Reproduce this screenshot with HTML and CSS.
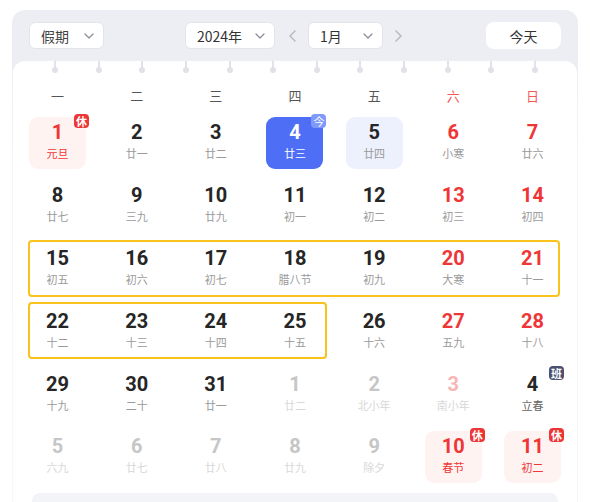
FILE: index.html
```html
<!DOCTYPE html>
<html lang="zh-CN">
<head>
<meta charset="utf-8">
<title>日历</title>
<link rel="stylesheet" href="styles.css">
</head>
<body>
<div class="panel">
  <div class="toolbar">
    <div class="select sel-holiday"><span>假期</span><svg class="chev" viewBox="0 0 10 6" width="10" height="6"><polyline points="1,1 5,5 9,1"/></svg></div>
    <div class="center">
      <div class="select sel-year"><span>2024年</span><svg class="chev" viewBox="0 0 10 6" width="10" height="6"><polyline points="1,1 5,5 9,1"/></svg></div>
      <svg class="arrow" viewBox="0 0 7 12" width="7" height="12"><polyline points="6,1 1,6 6,11"/></svg>
      <div class="select sel-month"><span>1月</span><svg class="chev" viewBox="0 0 10 6" width="10" height="6"><polyline points="1,1 5,5 9,1"/></svg></div>
      <svg class="arrow" viewBox="0 0 7 12" width="7" height="12"><polyline points="1,1 6,6 1,11"/></svg>
    </div>
    <button class="today-btn">今天</button>
  </div>
  <div class="card">
    <div class="rings">
      <i class="ring"></i><i class="ring"></i><i class="ring"></i><i class="ring"></i><i class="ring"></i><i class="ring"></i>
      <i class="ring"></i><i class="ring"></i><i class="ring"></i><i class="ring"></i><i class="ring"></i><i class="ring"></i>
    </div>
    <div class="weekdays">
      <span>一</span><span>二</span><span>三</span><span>四</span><span>五</span><span class="we">六</span><span class="we">日</span>
    </div>
    <div class="weeks">
      <div class="week">
        <div class="cell"><div class="day holiday"><span class="num">1</span><span class="lunar">元旦</span><b class="badge rest">休</b></div></div>
        <div class="cell"><div class="day"><span class="num">2</span><span class="lunar">廿一</span></div></div>
        <div class="cell"><div class="day"><span class="num">3</span><span class="lunar">廿二</span></div></div>
        <div class="cell"><div class="day today"><span class="num">4</span><span class="lunar">廿三</span><b class="badge now">今</b></div></div>
        <div class="cell"><div class="day selected"><span class="num">5</span><span class="lunar">廿四</span></div></div>
        <div class="cell"><div class="day weekend"><span class="num">6</span><span class="lunar">小寒</span></div></div>
        <div class="cell"><div class="day weekend"><span class="num">7</span><span class="lunar">廿六</span></div></div>
      </div>
      <div class="week">
        <div class="cell"><div class="day"><span class="num">8</span><span class="lunar">廿七</span></div></div>
        <div class="cell"><div class="day"><span class="num">9</span><span class="lunar">三九</span></div></div>
        <div class="cell"><div class="day"><span class="num">10</span><span class="lunar">廿九</span></div></div>
        <div class="cell"><div class="day"><span class="num">11</span><span class="lunar">初一</span></div></div>
        <div class="cell"><div class="day"><span class="num">12</span><span class="lunar">初二</span></div></div>
        <div class="cell"><div class="day weekend"><span class="num">13</span><span class="lunar">初三</span></div></div>
        <div class="cell"><div class="day weekend"><span class="num">14</span><span class="lunar">初四</span></div></div>
      </div>
      <div class="week">
        <div class="cell"><div class="day"><span class="num">15</span><span class="lunar">初五</span></div></div>
        <div class="cell"><div class="day"><span class="num">16</span><span class="lunar">初六</span></div></div>
        <div class="cell"><div class="day"><span class="num">17</span><span class="lunar">初七</span></div></div>
        <div class="cell"><div class="day"><span class="num">18</span><span class="lunar">腊八节</span></div></div>
        <div class="cell"><div class="day"><span class="num">19</span><span class="lunar">初九</span></div></div>
        <div class="cell"><div class="day weekend"><span class="num">20</span><span class="lunar">大寒</span></div></div>
        <div class="cell"><div class="day weekend"><span class="num">21</span><span class="lunar">十一</span></div></div>
        <div class="hl hl-full"></div>
      </div>
      <div class="week">
        <div class="cell"><div class="day"><span class="num">22</span><span class="lunar">十二</span></div></div>
        <div class="cell"><div class="day"><span class="num">23</span><span class="lunar">十三</span></div></div>
        <div class="cell"><div class="day"><span class="num">24</span><span class="lunar">十四</span></div></div>
        <div class="cell"><div class="day"><span class="num">25</span><span class="lunar">十五</span></div></div>
        <div class="cell"><div class="day"><span class="num">26</span><span class="lunar">十六</span></div></div>
        <div class="cell"><div class="day weekend"><span class="num">27</span><span class="lunar">五九</span></div></div>
        <div class="cell"><div class="day weekend"><span class="num">28</span><span class="lunar">十八</span></div></div>
        <div class="hl hl-part"></div>
      </div>
      <div class="week">
        <div class="cell"><div class="day"><span class="num">29</span><span class="lunar">十九</span></div></div>
        <div class="cell"><div class="day"><span class="num">30</span><span class="lunar">二十</span></div></div>
        <div class="cell"><div class="day"><span class="num">31</span><span class="lunar">廿一</span></div></div>
        <div class="cell"><div class="day other"><span class="num">1</span><span class="lunar">廿二</span></div></div>
        <div class="cell"><div class="day other"><span class="num">2</span><span class="lunar">北小年</span></div></div>
        <div class="cell"><div class="day other other-we"><span class="num">3</span><span class="lunar">南小年</span></div></div>
        <div class="cell"><div class="day workday"><span class="num">4</span><span class="lunar">立春</span><b class="badge work">班</b></div></div>
      </div>
      <div class="week">
        <div class="cell"><div class="day other"><span class="num">5</span><span class="lunar">六九</span></div></div>
        <div class="cell"><div class="day other"><span class="num">6</span><span class="lunar">廿七</span></div></div>
        <div class="cell"><div class="day other"><span class="num">7</span><span class="lunar">廿八</span></div></div>
        <div class="cell"><div class="day other"><span class="num">8</span><span class="lunar">廿九</span></div></div>
        <div class="cell"><div class="day other"><span class="num">9</span><span class="lunar">除夕</span></div></div>
        <div class="cell"><div class="day holiday"><span class="num">10</span><span class="lunar">春节</span><b class="badge rest">休</b></div></div>
        <div class="cell"><div class="day holiday"><span class="num">11</span><span class="lunar">初二</span><b class="badge rest">休</b></div></div>
      </div>
    </div>
    <div class="footer-bar"></div>
  </div>
</div>
</body>
</html>
```

FILE: styles.css
```css
* { box-sizing: border-box; }
html, body { margin: 0; padding: 0; background: #fff; height: 100%; overflow: hidden; }
body { font-family: "Noto Sans CJK SC", "Noto Sans", sans-serif; color: #333; }

.panel {
  margin: 10px 12px 0;
  padding: 0 1px;
  height: calc(100% - 10px);
  border-radius: 13px 13px 0 0;
  background: linear-gradient(#eceef3 0, #eceef3 70px, #f5f6f8 160px, #f7f7f9 100%);
  display: flex;
  flex-direction: column;
}

.toolbar {
  display: flex;
  align-items: center;
  padding: 12px 16px;
  height: 51px;
}

.select {
  height: 27px;
  border: 1px solid #e2e4e9;
  border-radius: 6px;
  background: #fff;
  display: flex;
  align-items: center;
  justify-content: space-between;
  padding: 0 9px 0 11px;
  font-size: 14px;
  color: #333;
}
.sel-holiday { width: 75px; color: #444; }
.sel-year { width: 90px; }
.sel-month { width: 75px; }

.chev polyline, .arrow polyline {
  fill: none;
  stroke: #8d8f96;
  stroke-width: 1.3;
  stroke-linecap: round;
  stroke-linejoin: round;
}
.arrow polyline { stroke: #b4b6bc; stroke-width: 1.4; }

.center {
  display: flex;
  align-items: center;
  margin-left: 81px;
}
.center .arrow { margin: 0 12px 0 14px; }
.center .arrow:last-child { margin: 0 0 0 12px; }

.today-btn {
  margin-left: auto;
  width: 75px;
  height: 27px;
  border: none;
  border-radius: 8px;
  background: #fff;
  font-family: inherit;
  font-size: 14px;
  color: #333;
  padding: 0;
}

.card {
  flex: 1;
  background: #fff;
  border-radius: 12px 12px 0 0;
  padding: 0 5px;
  display: flex;
  flex-direction: column;
}

.rings {
  height: 13px;
  display: flex;
  justify-content: space-between;
  padding: 0 34px;
}
.ring {
  position: relative;
  width: 6px;
  height: 13px;
}
.ring::before {
  content: "";
  position: absolute;
  left: 2px;
  top: 0;
  width: 2px;
  height: 8px;
  background: #e0e2e7;
}
.ring::after {
  content: "";
  position: absolute;
  left: 0;
  top: 6px;
  width: 6px;
  height: 6px;
  border-radius: 50%;
  background: #e0e2e7;
}

.weekdays {
  margin-top: 6px;
  height: 32px;
  display: grid;
  grid-template-columns: repeat(7, 1fr);
  text-align: center;
  line-height: 32px;
  font-size: 13px;
  color: #555;
}
.weekdays .we { color: #f25a5a; }

.week {
  position: relative;
  height: 62.8px;
  display: grid;
  grid-template-columns: repeat(7, 1fr);
}
.cell {
  display: flex;
  align-items: center;
  justify-content: center;
}
.day {
  position: relative;
  width: 57px;
  height: 52px;
  border-radius: 9px;
  padding-top: 3px;
  display: flex;
  flex-direction: column;
  align-items: center;
}
.num {
  font-family: Roboto, "Liberation Sans", sans-serif;
  font-weight: 700;
  font-size: 20px;
  line-height: 24px;
  color: #262626;
}
.lunar {
  margin-top: 1px;
  font-size: 11px;
  line-height: 16px;
  color: #9a9a9a;
  white-space: nowrap;
}

.weekend .num { color: #ef3636; }
.holiday { background: #fff3f2; }
.holiday .num, .holiday .lunar { color: #ef3636; }
.today { background: #4f6ef6; }
.today .num, .today .lunar { color: #fff; }
.selected { background: #edf1fe; }
.other .num { color: #c6c6c6; }
.other .lunar { color: #d8d8d8; }
.other-we .num { color: #f8b5b5; }
.workday .lunar { color: #666; }

.badge {
  position: absolute;
  top: -3px;
  right: -3px;
  width: 15px;
  height: 14px;
  border-radius: 4px;
  font-size: 11px;
  line-height: 14px;
  font-weight: 700;
  color: #fff;
  text-align: center;
}
.badge.rest { background: #ee3535; }
.badge.now { background: #7f99fb; font-weight: 400; }
.badge.work { background: #4b5170; }

.hl {
  position: absolute;
  top: 2px;
  left: 10px;
  height: 57px;
  border: 2px solid #f9c21c;
  border-radius: 4px;
  pointer-events: none;
}
.hl-full { width: 532px; }
.hl-part { width: 299px; }

.footer-bar {
  margin: 4px 14px 0;
  height: 20px;
  border-radius: 8px;
  background: #f3f4f8;
}
```
